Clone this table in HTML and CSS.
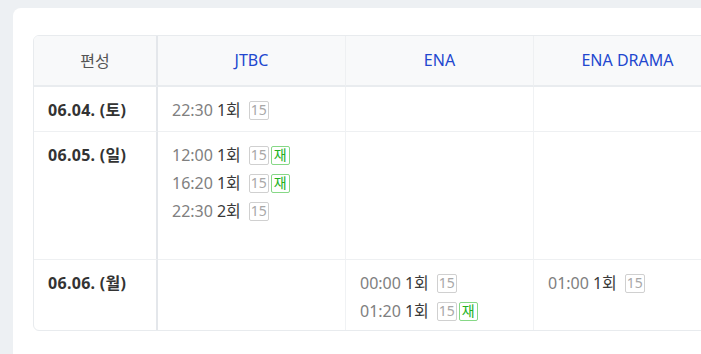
FILE: index.html
```html
<!DOCTYPE html>
<html lang="ko">
<head>
<meta charset="utf-8">
<link rel="stylesheet" href="styles.css">
</head>
<body>
<div class="card">
  <div class="sched">
    <div class="hd first">편성</div>
    <div class="hd ch">JTBC</div>
    <div class="hd ch">ENA</div>
    <div class="hd ch">ENA DRAMA</div>

    <div class="cell first date r1">06.04. (토)</div>
    <div class="cell r1">
      <div class="ep"><span class="tm">22:30</span> <span class="no">1회</span><span class="bd age">15</span></div>
    </div>
    <div class="cell r1"></div>
    <div class="cell r1"></div>

    <div class="cell first date r2">06.05. (일)</div>
    <div class="cell r2">
      <div class="ep"><span class="tm">12:00</span> <span class="no">1회</span><span class="bd age">15</span><span class="bd re">재</span></div>
      <div class="ep"><span class="tm">16:20</span> <span class="no">1회</span><span class="bd age">15</span><span class="bd re">재</span></div>
      <div class="ep"><span class="tm">22:30</span> <span class="no">2회</span><span class="bd age">15</span></div>
    </div>
    <div class="cell r2"></div>
    <div class="cell r2"></div>

    <div class="cell first date r3 last">06.06. (월)</div>
    <div class="cell r3 last"></div>
    <div class="cell r3 last">
      <div class="ep"><span class="tm">00:00</span> <span class="no">1회</span><span class="bd age">15</span></div>
      <div class="ep"><span class="tm">01:20</span> <span class="no">1회</span><span class="bd age">15</span><span class="bd re">재</span></div>
    </div>
    <div class="cell r3 last">
      <div class="ep"><span class="tm">01:00</span> <span class="no">1회</span><span class="bd age">15</span></div>
    </div>
  </div>
</div>
</body>
</html>
```

FILE: styles.css
```css
html, body {
  margin: 0;
  height: 100%;
}
body {
  background: #edf0f3;
  overflow: hidden;
  padding: 8px 0 0 13px;
  box-sizing: border-box;
  font-family: "Noto Sans", "Noto Sans CJK KR", sans-serif;
  font-size: 16px;
  color: #333;
}
.card {
  background: #fff;
  border-radius: 8px 0 0 0;
  width: 700px;
  height: 346px;
  padding: 27px 0 0 20px;
  box-sizing: border-box;
  overflow: hidden;
}
.sched {
  display: grid;
  grid-template-columns: 124px 188px 188px 188px;
  grid-template-rows: 51px 45px 128px 70px;
  width: 690px;
  border: 1px solid #e8ebee;
  border-radius: 6px;
  overflow: hidden;
}
.hd {
  background: #f8f9fa;
  border-bottom: 2px solid #e9ecef;
  border-right: 1px solid #eef0f2;
  display: flex;
  align-items: center;
  justify-content: center;
  color: #555;
  padding-bottom: 1px;
}
.hd.ch {
  color: #2247cf;
}
.first {
  border-right: 2px solid #e4e7eb !important;
}
.cell {
  border-right: 1px solid #f0f2f4;
  border-bottom: 1px solid #eef0f2;
  padding: 9px 0 0 14px;
  line-height: 28px;
}
.cell.last {
  border-bottom: none;
}
.date {
  font-weight: 700;
  color: #333;
  letter-spacing: 0.3px;
}
.ep {
  white-space: nowrap;
  height: 28px;
  display: flex;
  align-items: center;
}
.tm {
  color: #808080;
  margin-right: 4px;
}
.no {
  color: #3a3a3a;
}
.bd {
  display: inline-flex;
  align-items: center;
  justify-content: center;
  box-sizing: border-box;
  height: 19px;
  min-width: 19px;
  padding: 0 1px;
  font-size: 14px;
  line-height: 1;
  border: 1px solid #d0d0d0;
  border-radius: 2px;
  color: #a8a8a8;
  margin-left: 2px;
}
.bd.age {
  margin-left: 8px;
}
.bd.re {
  border-color: #86d886;
  color: #22b022;
}
```
